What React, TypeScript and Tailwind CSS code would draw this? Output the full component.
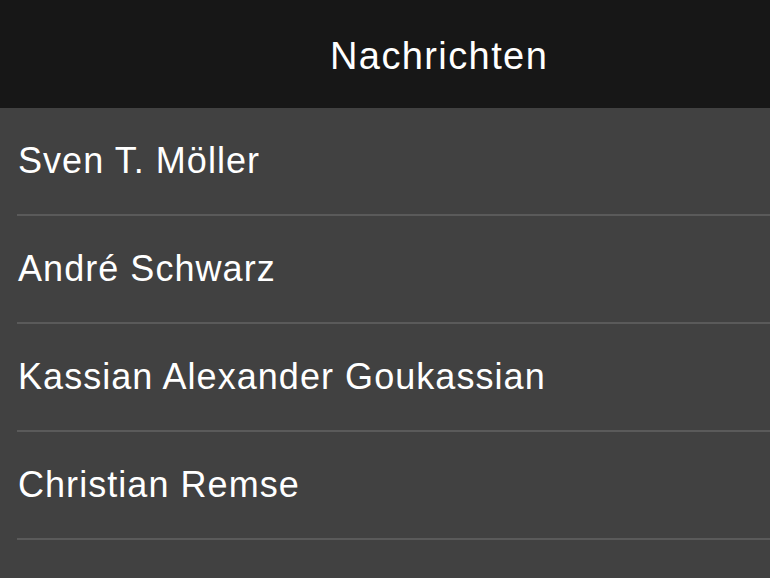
import React from "react";

const names = [
  "Sven T. Möller",
  "André Schwarz",
  "Kassian Alexander Goukassian",
  "Christian Remse",
  "Daniel Sander",
];

export default function App() {
  return (
    <div
      className="w-[770px] h-[578px] overflow-hidden bg-[#414141] text-white"
      style={{ fontFamily: '"Liberation Sans", Arial, sans-serif' }}
    >
      <div className="h-[108px] bg-[#171717] flex items-center">
        <div className="pl-[330px] text-[38px] leading-none tracking-[1.4px] pt-[4px]">
          Nachrichten
        </div>
      </div>
      {names.map((n) => (
        <div key={n} className="pl-[17px]">
          <div className="h-[106px] flex items-center text-[36px] leading-none pl-[1px] tracking-[1.05px]">
            {n}
          </div>
          <div className="h-[2px] bg-[#5a5a5a]" />
        </div>
      ))}
    </div>
  );
}
